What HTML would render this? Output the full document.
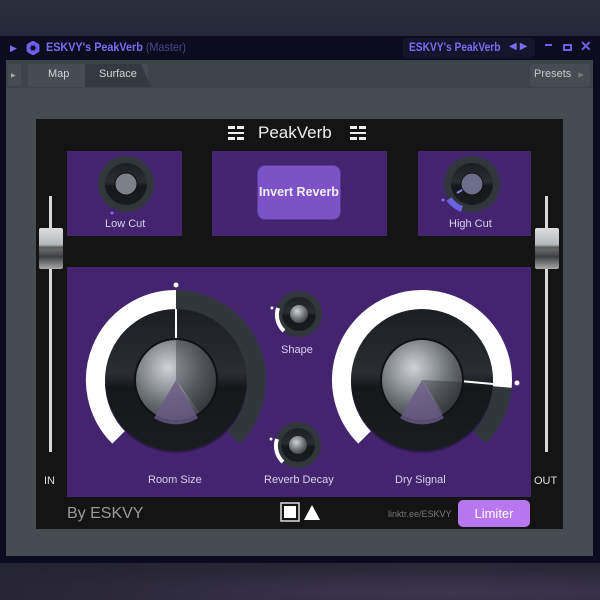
<!DOCTYPE html>
<html><head><meta charset="utf-8"><style>
*{margin:0;padding:0;box-sizing:border-box}
body{width:600px;height:600px;overflow:hidden;background:linear-gradient(180deg,#2b2f3d 0,#252838 36px);font-family:"Liberation Sans",sans-serif;position:relative}
.abs{position:absolute}
.lb{color:#d9d2ee;font-size:11px}
</style></head><body>
<div class="abs" style="left:0;top:563px;width:600px;height:37px;background:radial-gradient(ellipse at 450px 30px,#3e3652 0,#2a2737 60%,#232330 100%)"></div>
<div class="abs" style="left:0;top:36px;width:600px;height:527px;background:#0c0c1e"></div>
<div class="abs" style="left:10px;top:43px;color:#7d6cf0;font-size:9px">▶</div>
<svg class="abs" style="left:25px;top:40px" width="16" height="16" viewBox="0 0 16 16"><circle cx="8" cy="8" r="5" fill="none" stroke="#6e5ef2" stroke-width="3"/><g stroke="#6e5ef2" stroke-width="2.5"><line x1="8" y1="1" x2="8" y2="15"/><line x1="2" y1="4.5" x2="14" y2="11.5"/><line x1="2" y1="11.5" x2="14" y2="4.5"/></g><circle cx="8" cy="8" r="2.5" fill="#0c0c1e"/></svg>
<div class="abs" style="left:46px;top:40px;color:#7b6cf2;font-size:12px;font-weight:bold;transform:scaleX(.9);transform-origin:left">ESKVY's PeakVerb <span style="color:#4c4490;font-weight:normal">(Master)</span></div>
<div class="abs" style="left:403px;top:38px;width:132px;height:20px;background:#14142c;border-radius:4px"></div>
<div class="abs" style="left:409px;top:40px;color:#7b6cf2;font-size:12px;font-weight:bold;transform:scaleX(.85);transform-origin:left">ESKVY's PeakVerb</div>
<div class="abs" style="left:509px;top:41px;color:#7b6cf2;font-size:10px;letter-spacing:3px">◀▶</div>
<div class="abs" style="left:545px;top:44px;width:7px;height:2px;background:#6e5ef2"></div>
<div class="abs" style="left:563px;top:44px;width:9px;height:7px;border:2px solid #6e5ef2"></div>
<div class="abs" style="left:580px;top:38px;color:#6e5ef2;font-size:14px;font-weight:bold">✕</div>
<div class="abs" style="left:6px;top:60px;width:587px;height:29px;background:#3c4349"></div>
<div class="abs" style="left:6px;top:88px;width:587px;height:468px;background:#454c52"></div>
<div class="abs" style="left:8px;top:64px;width:13px;height:22px;background:#454c52;border-radius:2px;color:#aaa;font-size:6px;padding:8px 3px">▶</div>
<div class="abs" style="left:28px;top:64px;width:120px;height:23px;background:#454c52;border-radius:3px"></div>
<div class="abs" style="left:85px;top:64px;width:66px;height:23px;background:#343a3f;clip-path:polygon(0 0,85% 0,100% 100%,0 100%)"></div>
<div class="abs" style="left:48px;top:68px;color:#d0d4d8;font-size:11px">Map</div>
<div class="abs" style="left:99px;top:68px;color:#d0d4d8;font-size:11px">Surface</div>
<div class="abs" style="left:530px;top:64px;width:60px;height:23px;background:#454c52;border-radius:3px;color:#c6cacd;font-size:11px;padding:4px 4px">Presets <span style="font-size:7px;color:#777;margin-left:4px">▶</span></div>
<div class="abs" style="left:36px;top:119px;width:527px;height:410px;background:#141414"></div>
<div class="abs" style="left:67px;top:151px;width:115px;height:85px;background:#43246f"></div>
<div class="abs" style="left:212px;top:151px;width:175px;height:85px;background:#43246f"></div>
<div class="abs" style="left:418px;top:151px;width:113px;height:85px;background:#43246f"></div>
<div class="abs" style="left:67px;top:267px;width:464px;height:230px;background:#43246f"></div>
<div class="abs" style="left:257px;top:165px;width:84px;height:55px;background:#7d52c6;border-radius:8px;border:1px solid #5a3a96;color:#eee;font-size:12.5px;font-weight:bold;text-align:center;line-height:53px">Invert Reverb</div>
<div class="abs" style="left:258px;top:123px;color:#eee;font-size:17px">PeakVerb</div>
<svg class="abs" style="left:228px;top:125px" width="16" height="16"><g fill="#eee"><rect x="0" y="1" width="7" height="3"/><rect x="9" y="1" width="7" height="3"/><rect x="0" y="7" width="16" height="2"/><rect x="0" y="12" width="7" height="3"/><rect x="9" y="12" width="7" height="3"/></g></svg>
<svg class="abs" style="left:350px;top:125px" width="16" height="16"><g fill="#eee"><rect x="0" y="1" width="7" height="3"/><rect x="9" y="1" width="7" height="3"/><rect x="0" y="7" width="16" height="2"/><rect x="0" y="12" width="7" height="3"/><rect x="9" y="12" width="7" height="3"/></g></svg>
<div class="abs" style="left:49px;top:196px;width:3px;height:256px;background:#d8d8d8"></div>
<div class="abs" style="left:545px;top:196px;width:3px;height:256px;background:#d8d8d8"></div>
<div class="abs" style="left:39px;top:228px;width:24px;height:41px;background:linear-gradient(180deg,#ddd 0,#b5b8bc 40%,#555 48%,#666 52%,#3c3f44 70%,#aaa 100%);border-radius:2px"></div>
<div class="abs" style="left:535px;top:228px;width:24px;height:41px;background:linear-gradient(180deg,#ddd 0,#b5b8bc 40%,#555 48%,#666 52%,#3c3f44 70%,#aaa 100%);border-radius:2px"></div>
<div class="abs" style="left:44px;top:475px;color:#ddd;font-size:11px">IN</div>
<div class="abs" style="left:534px;top:475px;color:#ddd;font-size:11px">OUT</div>
<svg class="abs" style="left:0;top:0" width="600" height="600">
<defs>
<radialGradient id="kn" cx="40%" cy="35%" r="70%"><stop offset="0" stop-color="#d0d3d6"/><stop offset=".6" stop-color="#6e7378"/><stop offset="1" stop-color="#3a3e42"/></radialGradient>
<linearGradient id="dk" x1="0" y1="0" x2="0" y2="1"><stop offset="0" stop-color="#1b1f23"/><stop offset=".45" stop-color="#2a2e33"/><stop offset=".55" stop-color="#15181b"/><stop offset="1" stop-color="#1a1d20"/></linearGradient>
</defs>
<path d="M119.4,436.6 A80,80 0 1 1 232.6,436.6" fill="none" stroke="#30363a" stroke-width="20"/>
<path d="M119.4,436.6 A80,80 0 0 1 176,300" fill="none" stroke="#fff" stroke-width="20"/>
<circle cx="176" cy="382" r="71" fill="#2f1a52"/>
<circle cx="176" cy="380" r="71" fill="url(#dk)"/>
<line x1="176" y1="309" x2="176" y2="345" stroke="#fff" stroke-width="2"/>
<circle cx="176" cy="380" r="41" fill="url(#kn)" stroke="#111" stroke-width="2"/>
<path d="M176,339 A41,41 0 0 1 200,413 L176,380Z" fill="#1c2024" opacity=".35"/>
<path d="M176,380 L198,418 A41,41 0 0 1 154,418Z" fill="#6a5a8a" opacity=".8"/>
<circle cx="176" cy="285" r="2.5" fill="#fff"/>
<path d="M365.4,436.6 A80,80 0 1 1 478.6,436.6" fill="none" stroke="#30363a" stroke-width="20"/>
<path d="M365.4,436.6 A80,80 0 1 1 501.7,387" fill="none" stroke="#fff" stroke-width="20"/>
<circle cx="422" cy="382" r="71" fill="#2f1a52"/>
<circle cx="422" cy="380" r="71" fill="url(#dk)"/>
<line x1="460" y1="381" x2="493" y2="384" stroke="#fff" stroke-width="2"/>
<circle cx="422" cy="380" r="41" fill="url(#kn)" stroke="#111" stroke-width="2"/>
<path d="M422,380 L463,382 A41,41 0 0 1 444,414Z" fill="#1c2024" opacity=".35"/>
<path d="M422,380 L444,418 A41,41 0 0 1 400,418Z" fill="#6a5a8a" opacity=".8"/>
<circle cx="517" cy="383" r="2.5" fill="#fff"/>
<g>
<circle cx="299" cy="314" r="23" fill="#30363a"/><circle cx="299" cy="314" r="17" fill="url(#dk)"/>
<path d="M284,331 A22,22 0 0 1 278,308" fill="none" stroke="#fff" stroke-width="4"/>
<circle cx="299" cy="314" r="9" fill="url(#kn)"/><circle cx="272" cy="308" r="1.5" fill="#fff"/>
</g>
<g>
<circle cx="298" cy="445" r="23" fill="#30363a"/><circle cx="298" cy="445" r="17" fill="url(#dk)"/>
<path d="M283,462 A22,22 0 0 1 277,439" fill="none" stroke="#fff" stroke-width="4"/>
<circle cx="298" cy="445" r="9" fill="url(#kn)"/><circle cx="271" cy="439" r="1.5" fill="#fff"/>
</g>
<g>
<circle cx="126" cy="184" r="28" fill="#30363a"/><circle cx="126" cy="184" r="21" fill="url(#dk)"/>
<circle cx="126" cy="184" r="11" fill="#7c8088" stroke="#111"/><circle cx="112" cy="213" r="1.5" fill="#7b6cf2"/>
</g>
<g>
<circle cx="472" cy="184" r="28" fill="#30363a"/><circle cx="472" cy="184" r="21" fill="url(#dk)"/>
<path d="M462,209 A27,27 0 0 1 449,199" fill="none" stroke="#6a62e0" stroke-width="6"/>
<line x1="472" y1="184" x2="457" y2="193" stroke="#8a80ff" stroke-width="2"/>
<circle cx="472" cy="184" r="11" fill="#6c6f88" stroke="#111"/><circle cx="443" cy="200" r="1.5" fill="#7b6cf2"/>
</g>
<rect x="281" y="503" width="18" height="18" fill="none" stroke="#ddd" stroke-width="1.5"/>
<rect x="284" y="506" width="12" height="12" fill="#fff"/>
<path d="M304,520 L312,505 L320,520Z" fill="#fff"/>
</svg>
<div class="abs lb" style="left:105px;top:218px">Low Cut</div>
<div class="abs lb" style="left:449px;top:218px">High Cut</div>
<div class="abs lb" style="left:281px;top:344px">Shape</div>
<div class="abs lb" style="left:148px;top:474px">Room Size</div>
<div class="abs lb" style="left:264px;top:474px">Reverb Decay</div>
<div class="abs lb" style="left:395px;top:474px">Dry Signal</div>
<div class="abs" style="left:67px;top:505px;color:#9a9a9a;font-size:16px">By ESKVY</div>
<div class="abs" style="left:388px;top:509px;color:#777;font-size:9px">linktr.ee/ESKVY</div>
<div class="abs" style="left:458px;top:500px;width:72px;height:27px;background:#b877f0;border-radius:5px;color:#fff;font-size:13px;text-align:center;line-height:27px">Limiter</div>
</body></html>
